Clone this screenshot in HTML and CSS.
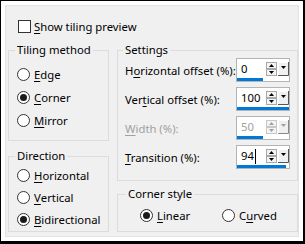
FILE: index.html
```html
<!DOCTYPE html>
<html lang="en">
<head>
    <meta charset="UTF-8">
    <title>Tiling</title>
    <link rel="stylesheet" href="styles.css">
</head>
<body>
    <div class="frame">
        <div class="panel">
            <label class="check-row"><span class="checkbox"></span><span><u>S</u>how tiling preview</span></label>
            <div class="columns">
                <div class="col">
                    <fieldset class="group tiling">
                        <legend>Tiling method</legend>
                        <label class="option"><span class="radio"></span><u>E</u>dge</label>
                        <label class="option"><span class="radio checked"></span><u>C</u>orner</label>
                        <label class="option"><span class="radio"></span><u>M</u>irror</label>
                    </fieldset>
                    <fieldset class="group direction">
                        <legend>Direction</legend>
                        <label class="option"><span class="radio"></span><u>H</u>orizontal</label>
                        <label class="option"><span class="radio"></span><u>V</u>ertical</label>
                        <label class="option"><span class="radio checked"></span><u>B</u>idirectional</label>
                    </fieldset>
                </div>
                <div class="col">
                    <fieldset class="group settings">
                        <legend>Settings</legend>
                        <div class="field">
                            <span>H<u>o</u>rizontal offset (%):</span>
                            <div class="spin">
                                <span class="value">0</span>
                                <svg class="arrows" width="11" height="14" viewBox="0 0 11 14"><rect x="0.5" y="0.5" width="10" height="6" fill="#f4f4f4" stroke="#a8a8a8"/><rect x="0.5" y="7.5" width="10" height="6" fill="#f4f4f4" stroke="#a8a8a8"/><polygon points="3,5 8,5 5.5,2" fill="#000"/><polygon points="3,9 8,9 5.5,12" fill="#000"/></svg>
                                <svg class="drop" width="11" height="14" viewBox="0 0 11 14"><rect x="0" y="0" width="10" height="13" fill="#f0f0f0"/><path d="M0.5 13V0.5H10" stroke="#fff" fill="none"/><path d="M10.5 0V13.5H0" stroke="#555" fill="none"/><polygon points="3,4 8,4 5.5,7" fill="#000"/></svg>
                                <span class="bar" style="width: 50%"></span>
                            </div>
                        </div>
                        <div class="field">
                            <span>Ver<u>t</u>ical offset (%):</span>
                            <div class="spin">
                                <span class="value">100</span>
                                <svg class="arrows" width="11" height="14" viewBox="0 0 11 14"><rect x="0.5" y="0.5" width="10" height="6" fill="#f4f4f4" stroke="#a8a8a8"/><rect x="0.5" y="7.5" width="10" height="6" fill="#f4f4f4" stroke="#a8a8a8"/><polygon points="3,5 8,5 5.5,2" fill="#000"/><polygon points="3,9 8,9 5.5,12" fill="#000"/></svg>
                                <svg class="drop" width="11" height="14" viewBox="0 0 11 14"><rect x="0" y="0" width="10" height="13" fill="#f0f0f0"/><path d="M0.5 13V0.5H10" stroke="#fff" fill="none"/><path d="M10.5 0V13.5H0" stroke="#555" fill="none"/><polygon points="3,4 8,4 5.5,7" fill="#000"/></svg>
                                <span class="bar" style="width: 100%"></span>
                            </div>
                        </div>
                        <div class="field disabled">
                            <span><u>W</u>idth (%):</span>
                            <div class="spin">
                                <span class="value">50</span>
                                <svg class="arrows" width="11" height="14" viewBox="0 0 11 14"><rect x="0.5" y="0.5" width="10" height="6" fill="#f4f4f4" stroke="#c8c8c8"/><rect x="0.5" y="7.5" width="10" height="6" fill="#f4f4f4" stroke="#c8c8c8"/><polygon points="3,5 8,5 5.5,2" fill="#a0a0a0"/><polygon points="3,9 8,9 5.5,12" fill="#a0a0a0"/></svg>
                                <svg class="drop" width="11" height="14" viewBox="0 0 11 14"><rect x="0" y="0" width="10" height="13" fill="#f0f0f0"/><path d="M0.5 13V0.5H10" stroke="#fff" fill="none"/><path d="M10.5 0V13.5H0" stroke="#888" fill="none"/><polygon points="3,4 8,4 5.5,7" fill="#a0a0a0"/></svg>
                                <span class="bar" style="width: 50%"></span>
                            </div>
                        </div>
                        <div class="field">
                            <span><u>T</u>ransition (%):</span>
                            <div class="spin">
                                <span class="value">94<span class="caret"></span></span>
                                <svg class="arrows" width="11" height="14" viewBox="0 0 11 14"><rect x="0.5" y="0.5" width="10" height="6" fill="#f4f4f4" stroke="#a8a8a8"/><rect x="0.5" y="7.5" width="10" height="6" fill="#f4f4f4" stroke="#a8a8a8"/><polygon points="3,5 8,5 5.5,2" fill="#000"/><polygon points="3,9 8,9 5.5,12" fill="#000"/></svg>
                                <svg class="drop" width="11" height="14" viewBox="0 0 11 14"><rect x="0" y="0" width="10" height="13" fill="#f0f0f0"/><path d="M0.5 13V0.5H10" stroke="#fff" fill="none"/><path d="M10.5 0V13.5H0" stroke="#555" fill="none"/><polygon points="3,4 8,4 5.5,7" fill="#000"/></svg>
                                <span class="bar" style="width: 94%"></span>
                            </div>
                        </div>
                    </fieldset>
                    <fieldset class="group corner">
                        <legend>Corner style</legend>
                        <div class="pair">
                            <label class="option"><span class="radio checked"></span><u>L</u>inear</label>
                            <label class="option"><span class="radio"></span>C<u>u</u>rved</label>
                        </div>
                    </fieldset>
                </div>
            </div>
        </div>
    </div>
</body>
</html>
```

FILE: styles.css
```css
body {
    margin: 0;
    font-family: "Noto Sans", sans-serif;
    font-size: 11.3px;
    color: #000;
}

u {
    text-decoration-thickness: 1px;
    text-underline-offset: 2px;
}

.frame {
    width: 305px;
    height: 244px;
    box-sizing: border-box;
    border-style: solid;
    border-color: #000;
    border-width: 1px 2px 3px 1px;
    padding: 4px 4px 3px 4px;
    background-color: #fff;
}

.panel {
    height: 232px;
    box-sizing: border-box;
    background-color: #f0f0f0;
    border: 1px solid #e2e2e2;
    padding: 12px 0 0 2px;
}

.check-row {
    display: flex;
    align-items: center;
    height: 16px;
    margin-left: 10px;
}

.checkbox {
    width: 13px;
    height: 13px;
    box-sizing: border-box;
    border: 1px solid #333;
    background-color: #fff;
    margin-right: 3px;
}

.columns {
    display: grid;
    grid-template-columns: 101px 181px;
    column-gap: 8px;
    margin-top: 8px;
}

.col {
    display: flex;
    flex-direction: column;
}

.group {
    margin: 0;
    border: 1px solid #dcdcdc;
    box-sizing: border-box;
    padding: 0;
    min-width: 0;
}

.group legend {
    line-height: 16px;
    padding: 0 2px;
}

.option {
    display: flex;
    align-items: center;
    white-space: nowrap;
}

.radio {
    width: 13px;
    height: 13px;
    box-sizing: border-box;
    border: 1px solid #333;
    border-radius: 50%;
    background-color: #fff;
    margin-right: 4px;
    display: flex;
    align-items: center;
    justify-content: center;
}

.radio.checked::after {
    content: "";
    width: 7px;
    height: 7px;
    border-radius: 50%;
    background-color: #1a1a1a;
}

.tiling {
    height: 99px;
    padding: 5px 0 0 6px;
}

.tiling .option {
    height: 23px;
    margin-left: 2px;
}

.direction {
    height: 84px;
    margin-top: 7px;
    padding: 0 0 0 6px;
}

.direction .option {
    height: 22px;
    margin-left: 2px;
}

.settings {
    height: 139px;
    padding: 0 7px 0 5px;
}

.field {
    display: flex;
    align-items: center;
    justify-content: space-between;
    height: 24px;
    margin-left: 2px;
    margin-bottom: 5px;
    white-space: nowrap;
}

.field.disabled {
    color: #a0a0a0;
}

.spin {
    position: relative;
    width: 54px;
    height: 24px;
    box-sizing: border-box;
    border: 1px solid #b4b4b4;
    background-color: #fff;
    display: flex;
    align-items: flex-start;
    padding: 2px 0 0 4px;
}

.spin .value {
    flex: 1;
    line-height: 16px;
    display: flex;
    align-items: center;
}

.caret {
    display: inline-block;
    width: 1px;
    height: 15px;
    background-color: #000;
    margin-left: 1px;
}

.spin .arrows {
    margin-top: 1px;
    margin-right: 1px;
}

.spin .drop {
    margin-top: 1px;
}

.spin .bar {
    position: absolute;
    left: 0;
    bottom: 0;
    height: 3px;
    background-color: #0078d7;
}

.corner {
    height: 46px;
    margin-top: 5px;
    padding: 5px 0 0 8px;
}

.pair {
    display: grid;
    grid-template-columns: 82px auto;
    margin-left: 14px;
    height: 16px;
}
```
